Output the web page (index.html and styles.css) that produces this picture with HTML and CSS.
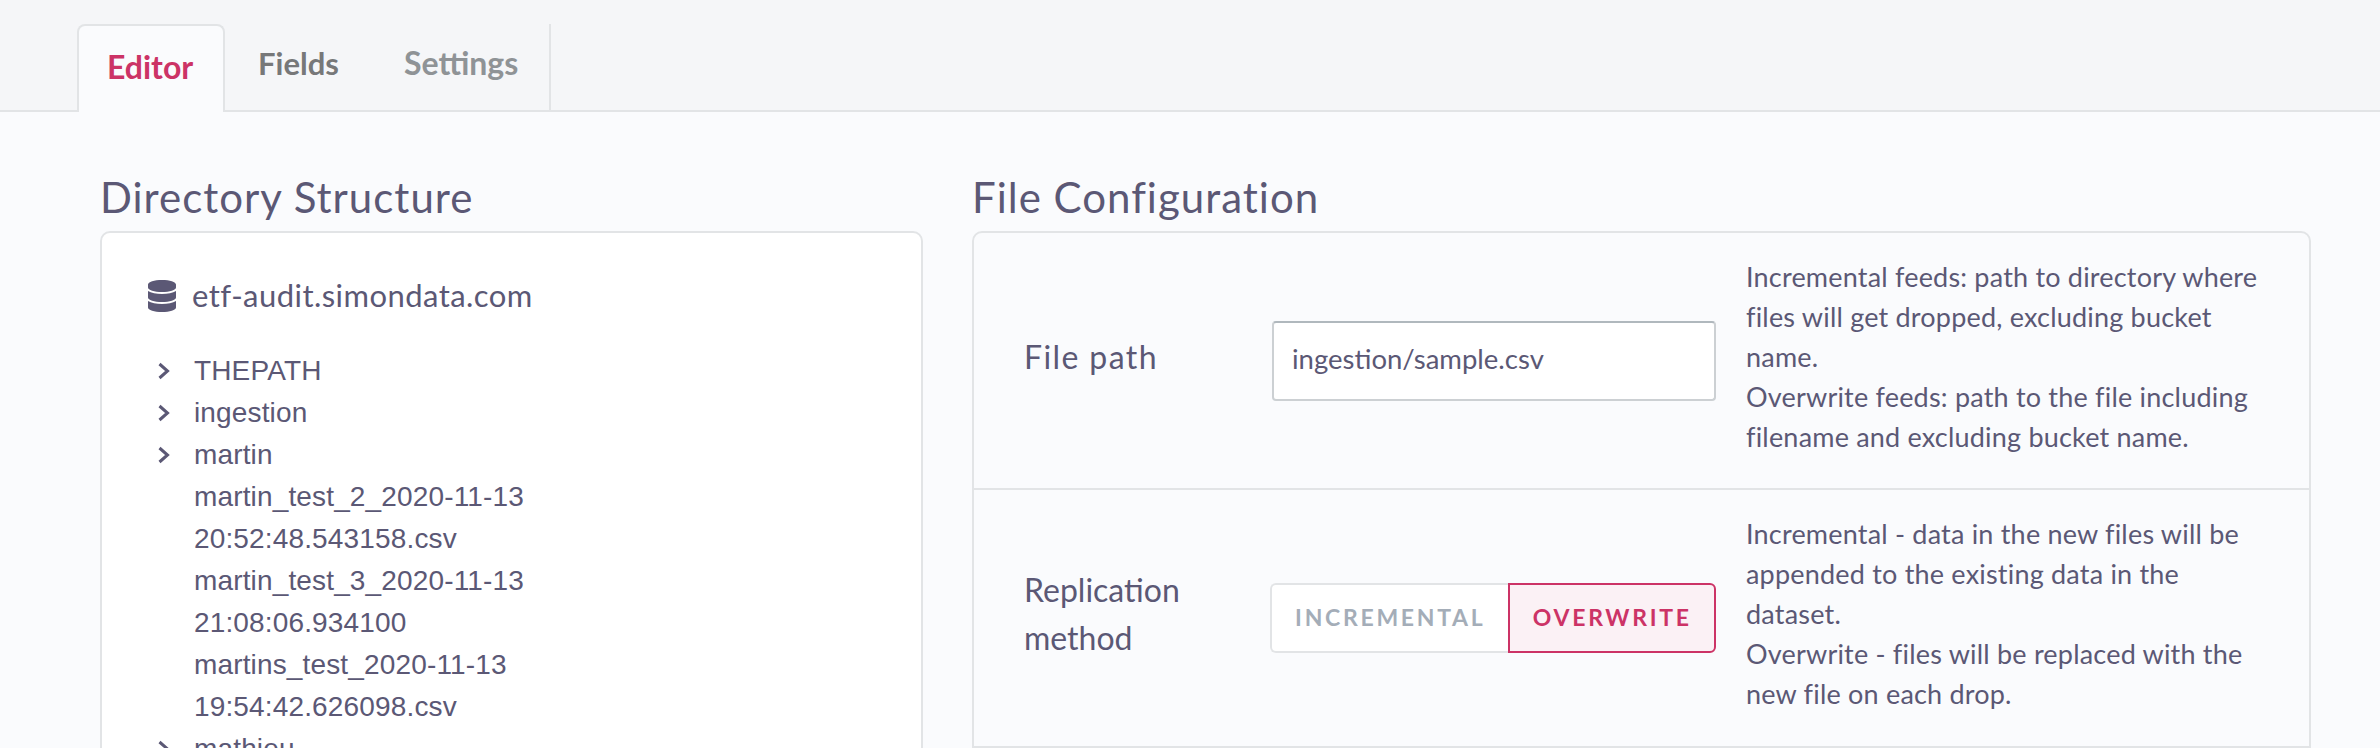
FILE: index.html
```html
<!DOCTYPE html>
<html lang="en">
<head>
<meta charset="utf-8">
<title>Editor</title>
<link rel="stylesheet" href="styles.css">
</head>
<body>
<nav class="tabs">
  <a class="tab tab-active">Editor</a>
  <a class="tab tab-fields">Fields</a>
  <a class="tab tab-settings">Settings</a>
</nav>
<main class="columns">
  <section class="col">
    <h2 class="heading">Directory Structure</h2>
    <div class="panel tree-panel">
      <div class="bucket">
        <svg class="db-icon" viewBox="0 0 448 512" aria-hidden="true"><path d="M448 73.143v45.714C448 159.143 347.667 192 224 192S0 159.143 0 118.857V73.143C0 32.857 100.333 0 224 0s224 32.857 224 73.143zM448 176v102.857C448 319.143 347.667 352 224 352S0 319.143 0 278.857V176c48.125 33.143 136.208 48.572 224 48.572S399.874 209.143 448 176zm0 160v102.857C448 479.143 347.667 512 224 512S0 479.143 0 438.857V336c48.125 33.143 136.208 48.572 224 48.572S399.874 369.143 448 336z"/></svg>
        <span class="bucket-name">etf-audit.simondata.com</span>
      </div>
      <ul class="tree">
        <li class="node"><svg class="chev" viewBox="0 0 12 18" aria-hidden="true"><polyline points="1.5,2 9.5,9 1.5,16"/></svg><span class="name">THEPATH</span></li>
        <li class="node"><svg class="chev" viewBox="0 0 12 18" aria-hidden="true"><polyline points="1.5,2 9.5,9 1.5,16"/></svg><span class="name">ingestion</span></li>
        <li class="node"><svg class="chev" viewBox="0 0 12 18" aria-hidden="true"><polyline points="1.5,2 9.5,9 1.5,16"/></svg><span class="name">martin</span></li>
        <li class="node file"><span class="name">martin_test_2_2020-11-13 20:52:48.543158.csv</span></li>
        <li class="node file"><span class="name">martin_test_3_2020-11-13 21:08:06.934100</span></li>
        <li class="node file"><span class="name">martins_test_2020-11-13 19:54:42.626098.csv</span></li>
        <li class="node"><svg class="chev" viewBox="0 0 12 18" aria-hidden="true"><polyline points="1.5,2 9.5,9 1.5,16"/></svg><span class="name">mathieu</span></li>
      </ul>
    </div>
  </section>
  <section class="col">
    <h2 class="heading">File Configuration</h2>
    <div class="panel config-panel">
      <div class="row">
        <div class="label label-short">File path</div>
        <div class="control"><input class="text-input" type="text" value="ingestion/sample.csv"></div>
        <p class="desc">Incremental feeds: path to directory where files will get dropped, excluding bucket name.<br>Overwrite feeds: path to the file including filename and excluding bucket name.</p>
      </div>
      <div class="row">
        <div class="label">Replication method</div>
        <div class="control">
          <div class="toggle">
            <span class="opt">INCREMENTAL</span>
            <span class="opt opt-on">OVERWRITE</span>
          </div>
        </div>
        <p class="desc">Incremental - data in the new files will be appended to the existing data in the dataset.<br>Overwrite - files will be replaced with the new file on each drop.</p>
      </div>
    </div>
  </section>
</main>
</body>
</html>
```
FILE: styles.css
```css
* { box-sizing: border-box; }
html, body { margin: 0; height: 748px; overflow: hidden; }
body {
  background: #fafbfd;
  color: #5b5875;
  font-family: Lato, "Open Sans", sans-serif;
}
.tabs {
  display: flex;
  height: 112px;
  padding: 24px 0 0 77px;
  background: #f5f6f8;
  border-bottom: 2px solid #e2e4e6;
}
.tab {
  display: flex;
  align-items: center;
  height: 86px;
  font-size: 32px;
  font-weight: 700;
  padding-bottom: 9px;
}
.tab-active {
  width: 148px;
  height: 88px;
  padding-left: 28px;
  padding-bottom: 6px;
  color: #cc3366;
  background: #fafbfd;
  border: 2px solid #e2e4e6;
  border-bottom: 0;
  border-radius: 8px 8px 0 0;
}
.tab-fields { width: 147px; padding-left: 33px; font-size: 31px; color: #777879; }
.tab-settings {
  width: 179px;
  padding-left: 32px;
  color: #8f9396;
  border-right: 2px solid #e2e4e6;
}
.columns {
  display: grid;
  grid-template-columns: 823px 1339px;
  gap: 49px;
  padding-left: 100px;
}
.heading {
  margin: 0;
  height: 119px;
  padding-top: 62px;
  font-size: 42px;
  line-height: 46px;
  letter-spacing: 1px;
  font-weight: 400;
}
.panel {
  border: 2px solid #e2e4e6;
  border-radius: 10px 10px 0 0;
}
.tree-panel {
  background: #fff;
  height: 600px;
  padding: 47px 0 0 46px;
}
.bucket {
  display: flex;
  align-items: center;
  gap: 16px;
  height: 32px;
}
.bucket-name {
  font-size: 31px;
  letter-spacing: 0.45px;
  margin-top: -3px;
}
.db-icon { width: 28px; height: 32px; fill: #5b5875; flex: none; }
.tree {
  list-style: none;
  margin: 38px 0 0;
  padding: 0 0 0 10px;
  font-family: "Liberation Sans", Arial, sans-serif;
  font-size: 28px;
  letter-spacing: 0.15px;
  line-height: 42px;
}
.node { position: relative; padding-left: 36px; }
.name { display: block; width: 400px; }
.chev {
  position: absolute;
  left: 0;
  top: 12px;
  width: 12px;
  height: 18px;
  fill: none;
  stroke: #5b5875;
  stroke-width: 3;
}
.config-panel { height: 600px; }
.row {
  display: grid;
  grid-template-columns: 248px 444px 1fr;
  align-items: center;
  padding-left: 50px;
  height: 257px;
  border-bottom: 2px solid #e2e4e6;
}
.row + .row { height: 258px; }
.label {
  font-size: 32px;
  line-height: 48px;
  width: 190px;
  padding-bottom: 8px;
}
.label-short { letter-spacing: 1.4px; }
.text-input {
  display: block;
  width: 444px;
  height: 80px;
  padding: 0 18px 5px;
  background: #fff;
  color: #5b5875;
  font: 27.5px Lato, "Open Sans", sans-serif;
  border: 2px solid #ccd0d3;
  border-top-color: #b0b8bd;
  border-radius: 4px;
  outline: 0;
}
.toggle {
  display: flex;
  height: 70px;
  margin-left: -2px;
  background: #fff;
  border-radius: 6px;
  font-size: 23px;
  font-weight: 700;
  letter-spacing: 2.7px;
}
.opt {
  display: flex;
  align-items: center;
  justify-content: center;
  width: 239px;
  padding-bottom: 3px;
  color: #a4adb8;
  border: 2px solid #e2e4e6;
  border-right: 0;
  border-radius: 6px 0 0 6px;
}
.opt-on {
  width: 208px;
  color: #cc3366;
  background: #fbf1f5;
  border: 2px solid #cc3366;
  border-radius: 0 6px 6px 0;
}
.desc {
  margin: 0 0 0 30px;
  width: 520px;
  padding-bottom: 8px;
  font-size: 27px;
  letter-spacing: 0.2px;
  line-height: 40px;
}
```
